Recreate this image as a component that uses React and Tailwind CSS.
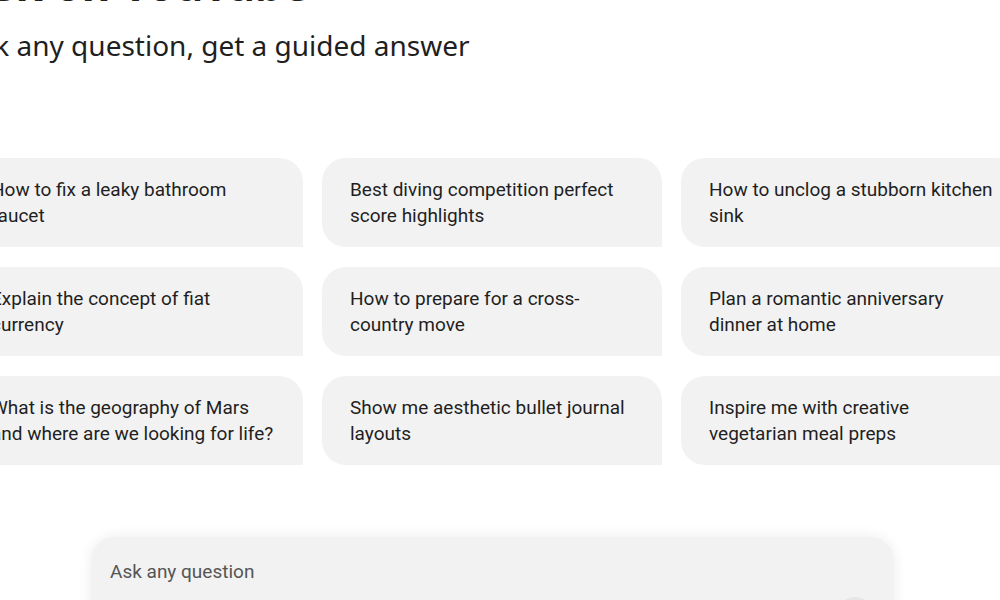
import { ArrowUp } from 'lucide-react';

const prompts = [
  'How to fix a leaky bathroom faucet',
  'Best diving competition perfect score highlights',
  'How to unclog a stubborn kitchen sink',
  'Explain the concept of fiat currency',
  'How to prepare for a cross-country move',
  'Plan a romantic anniversary dinner at home',
  'What is the geography of Mars and where are we looking for life?',
  'Show me aesthetic bullet journal layouts',
  'Inspire me with creative vegetarian meal preps',
];

function PromptCard({ text }) {
  return (
    <button
      type="button"
      className="flex h-[89px] items-center rounded-tl-[24px] rounded-tr-[24px] rounded-bl-[24px] rounded-br-none bg-[#f2f2f2] pl-[28px] pr-[27px] text-left text-[19px] leading-[26px] text-[#1f1f1f] [font-family:Roboto,'Liberation_Sans',sans-serif]"
    >
      <span className="block">{text}</span>
    </button>
  );
}

export default function App() {
  return (
    <div className="h-[600px] w-[1000px] overflow-hidden bg-white">
      <div className="ml-[-37px] w-[1059px] pt-px">
        <h1 className="mt-[-43px] h-[52px] text-[44px] font-bold leading-[52px] text-[#1f1f1f] [font-family:'Noto_Sans',sans-serif]">
          Ask on YouTube
        </h1>
        <p className="mt-[15px] text-[28px] leading-[40px] text-[#1f1f1f] [font-family:'Noto_Sans',sans-serif]">
          Ask any question, get a guided answer
        </p>

        <div className="mt-[93px] grid grid-cols-[340px_340px_340px] gap-x-[19px] gap-y-[20px]">
          {prompts.map((p) => (
            <PromptCard key={p} text={p} />
          ))}
        </div>

        <div className="mx-auto mt-[72px] w-[803px]">
          <div className="h-[110px] rounded-[24px] bg-[#f2f2f2] px-[19px] pt-[22px] shadow-[0_0_14px_rgba(0,0,0,0.08)]">
            <div className="flex items-start justify-between">
              <span className="text-[19px] leading-[26px] text-[#555555] [font-family:Roboto,'Liberation_Sans',sans-serif]">
                Ask any question
              </span>
            </div>
            <div className="mt-[12px] flex justify-end pr-[2px]">
              <span className="flex h-[36px] w-[36px] items-center justify-center rounded-full bg-[#e6e6e6] text-[#a0a0a0]">
                <ArrowUp size={18} />
              </span>
            </div>
          </div>
        </div>
      </div>
    </div>
  );
}
